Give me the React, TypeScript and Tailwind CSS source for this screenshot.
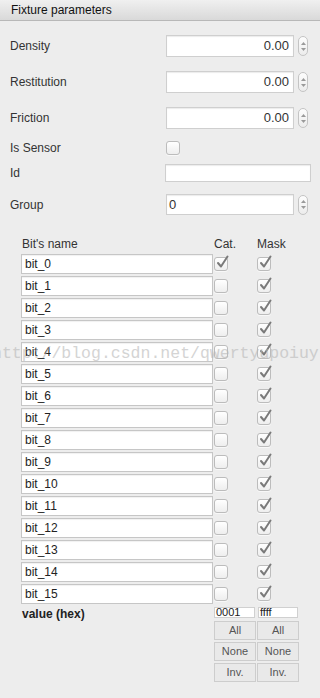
import React from "react";

const font = { fontFamily: '"Liberation Sans", Arial, sans-serif' };

function Spinner() {
  return (
    <div className="ml-[4px] flex h-[20px] w-[10px] flex-col items-center justify-center gap-[3px] rounded-full border border-[#c4c4c4] bg-gradient-to-b from-[#fdfdfd] to-[#ececec]">
      <svg width="5" height="3" viewBox="0 0 5 3"><path d="M0 3 L2.5 0 L5 3 Z" fill="#9a9a9a" /></svg>
      <svg width="5" height="3" viewBox="0 0 5 3"><path d="M0 0 L2.5 3 L5 0 Z" fill="#9a9a9a" /></svg>
    </div>
  );
}

function Check({ checked }: { checked: boolean }) {
  return (
    <div className="relative h-[14px] w-[14px] rounded-[3px] border border-[#bcbcbc] bg-gradient-to-b from-[#ffffff] to-[#eeeeee] shadow-[0_1px_0_rgba(255,255,255,0.6)]">
      {checked && (
        <svg className="absolute left-[1px] top-[-3px]" width="13" height="14" viewBox="0 0 13 14">
          <path d="M2 8 L5 11.5 L11.5 1.5" fill="none" stroke="#7a7a7a" strokeWidth="2" strokeLinecap="round" strokeLinejoin="round" />
        </svg>
      )}
    </div>
  );
}

function NumRow({ label, value, mt }: { label: string; value: string; mt: string }) {
  return (
    <div className={`flex h-[22px] items-center ${mt}`}>
      <div className="w-[166px] pl-[10px] text-[12px] text-[#333]">{label}</div>
      <div className="flex h-[22px] w-[128px] items-center justify-end border border-[#cfcfcf] bg-white pr-[4px] text-[13px] text-[#333] shadow-[inset_0_1px_1px_rgba(0,0,0,0.08)]">
        {value}
      </div>
      <Spinner />
    </div>
  );
}

function Btn({ children }: { children: React.ReactNode }) {
  return (
    <div className="flex h-[19px] w-[42px] items-center justify-center border border-[#cdcdcd] bg-[#e9e9e9] text-[11px] text-[#555]">
      {children}
    </div>
  );
}

export default function App() {
  const bits = Array.from({ length: 16 }, (_, i) => i);
  return (
    <div className="relative h-[698px] w-[320px] overflow-hidden bg-[#ededed]" style={font}>
      <div className="flex h-[21px] items-center border-b border-[#b8b8b8] bg-gradient-to-b from-[#f0f0f0] to-[#d9d9d9] pl-[11px] text-[12px] text-[#111]">
        Fixture parameters
      </div>
      <div className="flex flex-col">
        <NumRow label="Density" value="0.00" mt="mt-[14px]" />
        <NumRow label="Restitution" value="0.00" mt="mt-[14px]" />
        <NumRow label="Friction" value="0.00" mt="mt-[14px]" />
        <div className="mt-[12px] flex h-[14px] items-center">
          <div className="w-[166px] pl-[10px] text-[12px] text-[#333]">Is Sensor</div>
          <Check checked={false} />
        </div>
        <div className="mt-[9px] flex h-[18px] items-center">
          <div className="w-[165px] pl-[10px] text-[12px] text-[#333]">Id</div>
          <div className="h-[18px] w-[146px] border border-[#cfcfcf] bg-white shadow-[inset_0_1px_1px_rgba(0,0,0,0.08)]" />
        </div>
        <div className="mt-[12px] flex h-[21px] items-center">
          <div className="w-[166px] pl-[10px] text-[12px] text-[#333]">Group</div>
          <div className="flex h-[21px] w-[128px] items-center border border-[#cfcfcf] bg-white pl-[2px] text-[13px] text-[#333] shadow-[inset_0_1px_1px_rgba(0,0,0,0.08)]">
            0
          </div>
          <Spinner />
        </div>

        <div className="mt-[21px] flex h-[16px] items-center text-[12px] text-[#333]">
          <div className="w-[214px] pl-[22px]">Bit's name</div>
          <div className="w-[43px]">Cat.</div>
          <div>Mask</div>
        </div>
        <div className="mt-[2px] flex flex-col gap-[2px]">
          {bits.map((i) => (
            <div key={i} className="flex h-[20px] items-center">
              <div className="ml-[21px] flex h-[20px] w-[192px] items-center border border-[#c6c6c6] bg-white pl-[3px] text-[12px] text-[#222] shadow-[inset_0_1px_1px_rgba(0,0,0,0.06)]">
                bit_{i}
              </div>
              <div className="ml-[1px] w-[43px]">
                <Check checked={i === 0} />
              </div>
              <Check checked={true} />
            </div>
          ))}
        </div>
        <div className="mt-[3px] flex">
          <div className="w-[214px] pl-[22px] text-[12px] font-bold leading-[14px] text-[#222]">value (hex)</div>
          <div className="flex flex-col">
            <div className="flex gap-[3px]">
              <div className="flex h-[11px] w-[41px] items-center border border-[#d0d0d0] bg-white pl-[1px] text-[11px] leading-none text-[#222]">0001</div>
              <div className="flex h-[11px] w-[40px] items-center border border-[#d0d0d0] bg-white pl-[1px] text-[11px] leading-none text-[#222]">ffff</div>
            </div>
            <div className="mt-[3px] flex flex-col gap-[2px]">
              <div className="flex gap-[1px]"><Btn>All</Btn><Btn>All</Btn></div>
              <div className="flex gap-[1px]"><Btn>None</Btn><Btn>None</Btn></div>
              <div className="flex gap-[1px]"><Btn>Inv.</Btn><Btn>Inv.</Btn></div>
            </div>
          </div>
        </div>
      </div>
      <div
        className="pointer-events-none absolute left-[-8px] top-[346px] whitespace-nowrap text-[16.5px] leading-none text-[#b8b8b8] opacity-60"
        style={{ fontFamily: '"Liberation Mono", "DejaVu Sans Mono", monospace' }}
      >
        http://blog.csdn.net/qwertyupoiuy
      </div>
    </div>
  );
}
